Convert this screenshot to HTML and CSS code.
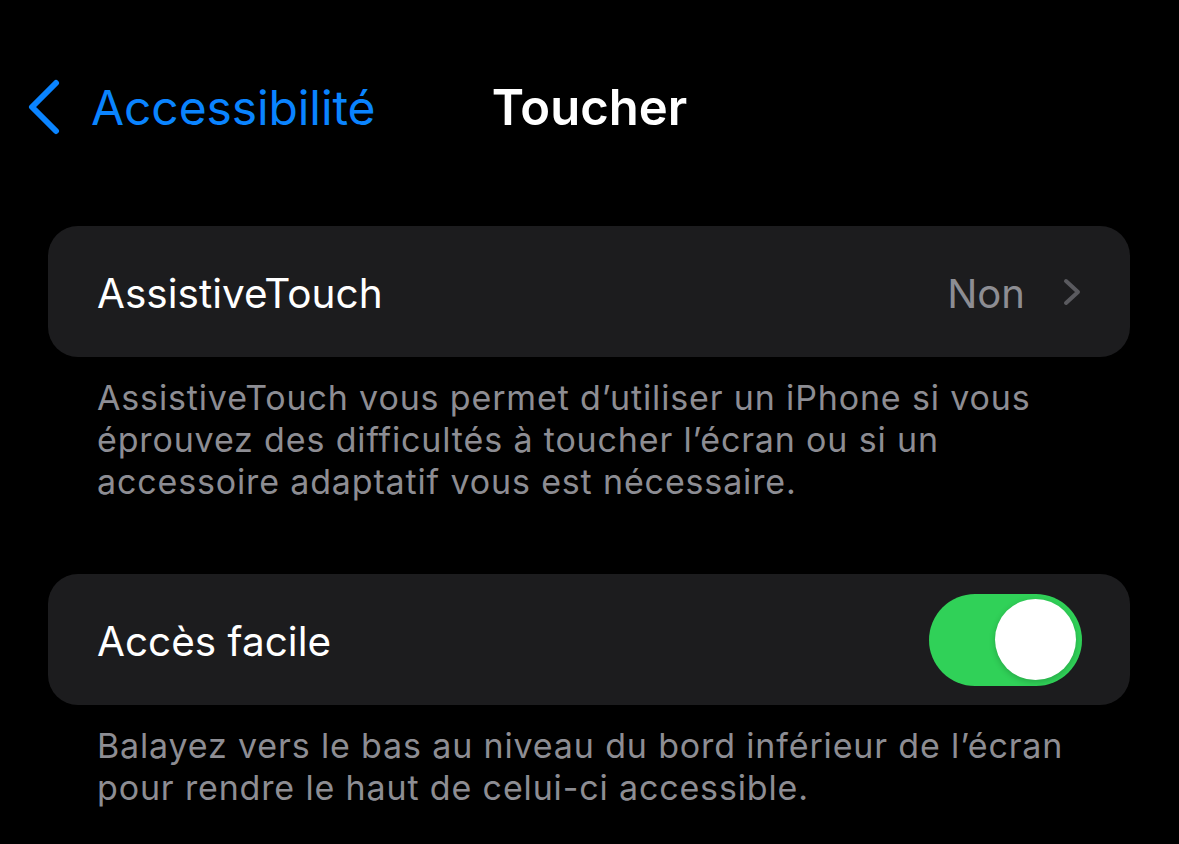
FILE: index.html
```html
<!DOCTYPE html>
<html lang="fr">
<head>
  <meta charset="UTF-8" />
  <meta name="viewport" content="width=device-width, initial-scale=1.0" />
  <title>Toucher</title>
  <link rel="stylesheet" href="styles.css">
</head>
<body>
  <header class="nav-bar">
    <a class="back-link" href="#">
      <svg class="back-chevron" width="34" height="56" viewBox="0 0 34 56">
        <path d="M30 4 L6 28 L30 52" fill="none" stroke="#0a84ff" stroke-width="6" stroke-linecap="round" stroke-linejoin="round"/>
      </svg>
      <span>Accessibilité</span>
    </a>
    <h1 class="nav-title">Toucher</h1>
    <div></div>
  </header>

  <main class="settings">
    <section class="group">
      <div class="cell">
        <span class="cell-label">AssistiveTouch</span>
        <span class="cell-value">Non</span>
        <svg class="cell-chevron" width="20" height="28" viewBox="0 0 20 28">
          <path d="M4 3 L16 14 L4 25" fill="none" stroke="#5a5a5f" stroke-width="4" stroke-linecap="round" stroke-linejoin="round"/>
        </svg>
      </div>
      <p class="group-footer">AssistiveTouch vous permet d’utiliser un iPhone si vous éprouvez des difficultés à toucher l’écran ou si un accessoire adaptatif vous est nécessaire.</p>
    </section>

    <section class="group">
      <div class="cell">
        <span class="cell-label">Accès facile</span>
        <span class="toggle on"><span class="knob"></span></span>
      </div>
      <p class="group-footer">Balayez vers le bas au niveau du bord inférieur de l’écran pour rendre le haut de celui-ci accessible.</p>
    </section>
  </main>
</body>
</html>
```

FILE: styles.css
```css
* {
  box-sizing: border-box;
  margin: 0;
  padding: 0;
}

body {
  background: #000;
  color: #fff;
  font-family: Inter, "Noto Sans", sans-serif;
  width: 1179px;
  height: 844px;
  overflow: hidden;
}

.nav-bar {
  display: grid;
  grid-template-columns: 1fr auto 1fr;
  align-items: center;
  height: 74px;
  margin-top: 70px;
  padding: 0 26px;
}

.back-link {
  display: flex;
  align-items: center;
  gap: 31px;
  color: #0a84ff;
  text-decoration: none;
  font-size: 48px;
  letter-spacing: -0.1px;
}

.nav-title {
  font-size: 49px;
  font-weight: 600;
  letter-spacing: 0;
}

.settings {
  padding: 82px 49px 0 48px;
}

.group {
  margin-bottom: 71px;
}

.cell {
  display: flex;
  align-items: center;
  height: 131px;
  background: #1c1c1e;
  border-radius: 30px;
  padding: 0 48px 0 49px;
}

.cell-label {
  flex: 1;
  font-size: 40.5px;
  padding-top: 3px;
}

.cell-value {
  font-size: 40px;
  color: #8d8d93;
  margin-right: 37px;
  padding-top: 3px;
}

.toggle {
  display: flex;
  align-items: center;
  width: 153px;
  height: 92px;
  border-radius: 46px;
  background: #30d158;
  padding: 0 6px;
}

.toggle.on {
  justify-content: flex-end;
}

.knob {
  width: 81px;
  height: 81px;
  border-radius: 50%;
  background: #fff;
  box-shadow: 0 2px 6px rgba(0, 0, 0, 0.2);
}

.group-footer {
  padding: 20px 48px 0 49px;
  font-size: 34px;
  line-height: 42px;
  letter-spacing: 0.85px;
  color: #8d8d93;
}
```
